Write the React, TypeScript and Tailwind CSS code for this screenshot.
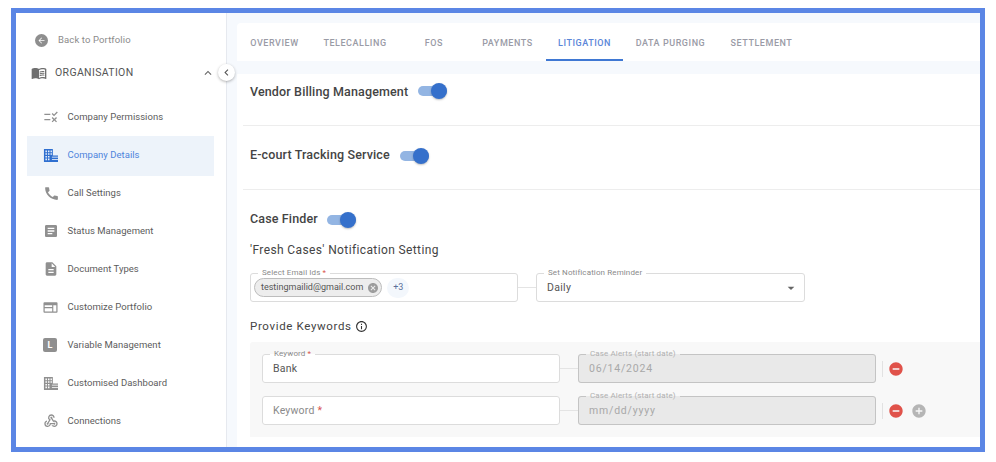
import type { ReactNode } from 'react';
import {
    MdArrowBack,
    MdMenuBook,
    MdExpandLess,
    MdChevronLeft,
    MdRule,
    MdCall,
    MdArticle,
    MdDescription,
    MdWebhook,
    MdCancel,
    MdInfoOutline,
    MdRemoveCircle,
    MdAddCircle,
    MdArrowDropDown,
} from 'react-icons/md';

// ─── Small drawn icons ──────────────────────────────────────────────────────

function BuildingIcon({ className }: { className: string }) {
    return (
        <svg className={className} viewBox="0 0 16 16" fill="currentColor">
            <path fillRule="evenodd" d="M1 1h9.5v7H16v7H1V1zm1.6 1.6v1.8h1.6V2.6H2.600zm2.700 0v1.800h1.600V2.600H5.300zm2.700 0v1.800h1.500V2.600H8zM2.600 5.500v1.800h1.600V5.500H2.600zm2.700 0v1.800h1.600V5.500H5.300zm2.700 0v1.800h1.500V5.500H8zM2.600 8.400v1.800h1.600V8.400H2.600zm2.700 0v1.800h1.600V8.400H5.300zM2.600 11.300v1.800h1.600v-1.800H2.600zm2.700 0v1.800h1.600v-1.800H5.300z" />
            <path fill="#fff" d="M9.500 9.300H16v.8H9.500zM9.500 11.700H16v.8H9.500z" />
        </svg>
    );
}

function PortfolioIcon({ className }: { className: string }) {
    return (
        <svg className={className} viewBox="0 0 16 16" fill="currentColor">
            <path fillRule="evenodd" d="M1.500 2.500h13a1 1 0 0 1 1 1v9a1 1 0 0 1-1 1h-13a1 1 0 0 1-1-1v-9a1 1 0 0 1 1-1zm.3 3.200v6.500h8V8.700h-8V7.500h8V5.700h-8zm9.200 0v6.500h3.200V5.700H11z" />
        </svg>
    );
}

function VariableIcon({ className }: { className: string }) {
    return (
        <span className={`${className} flex items-center justify-center rounded-[2px] bg-[#8f8f8f] text-[9px] font-bold leading-none text-white`}>
            L
        </span>
    );
}

// ─── Sidebar ────────────────────────────────────────────────────────────────

const NAV_ITEMS: { label: string; icon: ReactNode; active?: boolean }[] = [
    { label: 'Company Permissions', icon: <MdRule className="h-[16px] w-[16px]" /> },
    { label: 'Company Details', icon: <BuildingIcon className="h-[15px] w-[15px]" />, active: true },
    { label: 'Call Settings', icon: <MdCall className="h-[17px] w-[17px]" /> },
    { label: 'Status Management', icon: <MdArticle className="h-[16px] w-[16px]" /> },
    { label: 'Document Types', icon: <MdDescription className="h-[16px] w-[16px]" /> },
    { label: 'Customize Portfolio', icon: <PortfolioIcon className="h-[15px] w-[15px]" /> },
    { label: 'Variable Management', icon: <VariableIcon className="h-[14px] w-[14px]" /> },
    { label: 'Customised Dashboard', icon: <BuildingIcon className="h-[15px] w-[15px]" /> },
    { label: 'Connections', icon: <MdWebhook className="h-[16px] w-[16px]" /> },
];

function Sidebar() {
    return (
        <aside className="relative flex h-full w-[211px] shrink-0 flex-col border-r border-[#e6e9ef] bg-white">
            <div className="mt-[20px] flex h-[15px] items-center pl-[19px]">
                <span className="flex h-[13px] w-[13px] items-center justify-center rounded-full bg-[#8e8e8e] text-white">
                    <MdArrowBack className="h-[9px] w-[9px]" />
                </span>
                <span className="ml-[10px] text-[9.5px] tracking-[0.12px] text-[#8b8b8b]">Back to Portfolio</span>
            </div>
            <div className="mt-[13px] flex h-[24px] items-center pl-[15px]">
                <MdMenuBook className="h-[16px] w-[16px] text-[#6f6f6f]" />
                <span className="ml-[8px] text-[10.500px] tracking-[0.35px] text-[#555]">ORGANISATION</span>
                <MdExpandLess className="ml-[67px] h-[14px] w-[14px] text-[#666]" />
            </div>
            <nav className="mt-[13px] ml-[11px] flex w-[187px] flex-col self-start">
                {NAV_ITEMS.map((item) => (
                    <div
                        key={item.label}
                        className={`flex items-center pl-[16px] ${item.active ? 'h-[40px] -mb-[2px] pb-[2px] bg-[#edf3fa] text-[#4d84dc]' : 'h-[38px] text-[#5c5c5c]'}`}
                    >
                        <span className={`flex w-[24.500px] shrink-0 ${item.active ? 'text-[#2f6fd0]' : 'text-[#909090]'}`}>{item.icon}</span>
                        <span className="text-[9.500px] tracking-[0.03px]">{item.label}</span>
                    </div>
                ))}
            </nav>
            <button className="absolute left-[202px] top-[51px] flex h-[17px] w-[17px] items-center justify-center rounded-full bg-white text-[#555] shadow-[0_1px_3px_rgba(0,0,0,0.3)]">
                <MdChevronLeft className="h-[13px] w-[13px]" />
            </button>
        </aside>
    );
}

// ─── Form bits ──────────────────────────────────────────────────────────────

function Toggle() {
    return (
        <span className="relative block h-[10px] w-[29px] shrink-0 rounded-full bg-[#93b5e3]">
            <span className="absolute -top-[3px] right-0 block h-[16px] w-[16px] rounded-full bg-[#3570cb] shadow-[0_1px_2px_rgba(0,0,0,0.25)]" />
        </span>
    );
}

function OutlinedField({
    label,
    required,
    disabled,
    width,
    height,
    children,
}: {
    label?: string;
    required?: boolean;
    disabled?: boolean;
    width: string;
    height: string;
    children: ReactNode;
}) {
    return (
        <div className={`relative flex shrink-0 items-center ${width} ${height}`}>
            <fieldset
                className={`absolute inset-x-0 bottom-0 min-w-0 rounded-[3px] border px-[7px] ${label ? '-top-[5px]' : 'top-0'} ${disabled ? 'border-[#c4c4c4] bg-[#e9e9e9]' : 'border-[#dcdcdc] bg-white'}`}
            >
                {label && (
                    <legend className={`px-[4px] pb-[2px] text-[8px] leading-[9px] tracking-[0.12px] ${disabled ? 'text-[#b0b0b0]' : 'text-[#8a8a8a]'}`}>
                        {label}
                        {required && <span className="text-[#d9534f]"> *</span>}
                    </legend>
                )}
            </fieldset>
            <div className="relative flex w-full items-center px-[11px]">{children}</div>
        </div>
    );
}

function Connector() {
    return <span className="block h-px w-[18px] shrink-0 bg-[#e4e4e4]" />;
}

function KeywordRow({ keyword, date }: { keyword?: string; date: string }) {
    return (
        <div className="flex items-center">
            <OutlinedField label={keyword ? 'Keyword' : undefined} required width="w-[298px]" height="h-[29px]">
                {keyword ? (
                    <span className="text-[10.500px] tracking-[0.2px] text-[#555]">{keyword}</span>
                ) : (
                    <span className="text-[10.500px] tracking-[0.2px] text-[#8a8a8a]">
                        Keyword <span className="text-[#d9534f]">*</span>
                    </span>
                )}
            </OutlinedField>
            <Connector />
            <OutlinedField label="Case Alerts (start date)" disabled width="w-[298px]" height="h-[29px]">
                <span className="text-[10.500px] tracking-[0.8px] text-[#a8a8a8]">{date}</span>
            </OutlinedField>
            <span className="ml-[6px] block h-[16px] w-px bg-[#e2e2e2]" />
            <MdRemoveCircle className="ml-[5px] h-[16px] w-[16px] text-[#e0524a]" />
            {!keyword && <MdAddCircle className="ml-[7px] h-[16px] w-[16px] text-[#b5b5b5]" />}
        </div>
    );
}

// ─── Main panel ─────────────────────────────────────────────────────────────

const TABS = [
    { label: 'OVERVIEW', width: 'w-[73px]' },
    { label: 'TELECALLING', width: 'w-[88px]' },
    { label: 'FOS', width: 'w-[70px]' },
    { label: 'PAYMENTS', width: 'w-[77px]' },
    { label: 'LITIGATION', width: 'w-[77px]', active: true },
    { label: 'DATA PURGING', width: 'w-[95px]' },
    { label: 'SETTLEMENT', width: 'w-[87px]' },
];

function Tabs() {
    return (
        <div className="flex h-[38px] items-stretch rounded-tl-[4px] bg-white pl-[1px]">
            {TABS.map((tab) => (
                <div
                    key={tab.label}
                    className={`flex items-center justify-center whitespace-nowrap border-b-2 pt-[5px] text-[9px] font-medium tracking-[0.55px] ${tab.width} ${tab.active ? 'border-[#3f78d3] text-[#5b86d8]' : 'border-transparent text-[#9a9ba6]'}`}
                >
                    {tab.label}
                </div>
            ))}
        </div>
    );
}

function Settings() {
    return (
        <div className="min-h-0 flex-1 overflow-hidden bg-white pl-[6px]">
            <div className="flex h-[52px] items-start border-b border-[#ededed] pl-[7px] pt-[9px]">
                <span className="text-[12.500px] font-medium leading-[17px] tracking-[0.14px] text-[#444]">Vendor Billing Management</span>
                <span className="ml-[10px] mt-[3px]"><Toggle /></span>
            </div>
            <div className="flex h-[64px] items-center border-b border-[#ededed] pb-[4px] pl-[7px]">
                <span className="text-[12.500px] font-medium tracking-[0.14px] text-[#444]">E-court Tracking Service</span>
                <span className="ml-[10px]"><Toggle /></span>
            </div>
            <div className="pl-[7px] pt-[21px]">
                <div className="flex h-[17px] items-center">
                    <span className="text-[12.500px] font-medium tracking-[0.14px] text-[#444]">Case Finder</span>
                    <span className="ml-[9px]"><Toggle /></span>
                </div>
                <div className="mt-[15px] text-[12px] leading-[15px] tracking-[0.38px] text-[#444]">'Fresh Cases' Notification Setting</div>
                <div className="mt-[15px] flex items-center">
                    <OutlinedField label="Select Email Ids" required width="w-[268px]" height="h-[29px]">
                        <span className="-ml-[7px] flex h-[19px] items-center rounded-full border border-[#bdbdbd] bg-[#ededed] pl-[6px] pr-[2px] text-[9px] text-[#555]">
                            testingmailid@gmail.com
                            <MdCancel className="ml-[4px] h-[12px] w-[12px] text-[#9d9d9d]" />
                        </span>
                        <span className="ml-[5px] flex h-[20px] w-[22px] items-center justify-center rounded-full bg-[#f3f7fc] text-[9px] text-[#5a6f9a]">+3</span>
                    </OutlinedField>
                    <Connector />
                    <OutlinedField label="Set Notification Reminder" width="w-[269px]" height="h-[29px]">
                        <span className="text-[10.500px] tracking-[0.3px] text-[#555]">Daily</span>
                        <MdArrowDropDown className="absolute right-[6px] h-[16px] w-[16px] text-[#666]" />
                    </OutlinedField>
                </div>
                <div className="mt-[17px] flex h-[15px] items-center">
                    <span className="text-[11.500px] tracking-[0.65px] text-[#444]">Provide Keywords</span>
                    <MdInfoOutline className="ml-[3px] h-[13px] w-[13px] text-[#333]" />
                </div>
                <div className="mt-[8px] flex h-[95px] flex-col gap-[13px] rounded-tl-[3px] bg-[#f8f8f8] pl-[12px] pt-[12px]">
                    <KeywordRow keyword="Bank" date="06/14/2024" />
                    <KeywordRow date="mm/dd/yyyy" />
                </div>
            </div>
        </div>
    );
}

export default function App() {
    return (
        <div className="h-[462px] w-[996px] overflow-hidden bg-white pl-[11px] pt-[8px] font-['Roboto',sans-serif]">
            <div className="flex h-[444px] w-[974px] border-[5px] border-[#5b86e5]">
                <Sidebar />
                <main className="flex min-w-0 flex-1 flex-col gap-[13px] bg-[#f6f9fd] pl-[10px] pt-[10px]">
                    <Tabs />
                    <Settings />
                </main>
            </div>
        </div>
    );
}
